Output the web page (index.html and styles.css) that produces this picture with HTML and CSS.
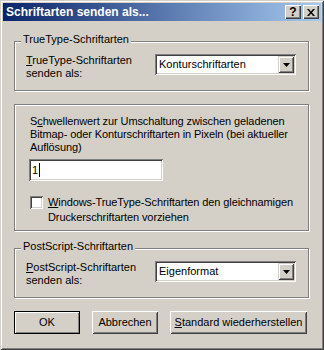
FILE: index.html
```html
<!DOCTYPE html>
<html lang="de">
<head>
    <meta charset="UTF-8">
    <title>Schriftarten senden als...</title>
    <link rel="stylesheet" href="styles.css">
</head>
<body>
    <div class="window">
        <div class="titlebar">
            <span class="title">Schriftarten senden als...</span>
            <div class="title-buttons">
                <span class="tbtn tbtn-help">?</span>
                <span class="tbtn">
                    <svg width="8" height="7" viewBox="0 0 8 7">
                        <path d="M0 0h2l2 2.5L6 0h2L5 3.5 8 7H6L4 4.5 2 7H0l3-3.5z" fill="#000"/>
                    </svg>
                </span>
            </div>
        </div>

        <div class="client">
            <fieldset class="group group-first">
                <legend>TrueType-Schriftarten</legend>
                <div class="row">
                    <label class="row-label"><u>T</u>rueType-Schriftarten<br>senden als:</label>
                    <div class="combo">
                        <span class="combo-text">Konturschriftarten</span>
                        <span class="combo-btn">
                            <svg width="7" height="4" viewBox="0 0 7 4"><path d="M0 0h7L3.5 4z" fill="#000"/></svg>
                        </span>
                    </div>
                </div>
            </fieldset>

            <fieldset class="group group-plain">
                <p class="hint">S<u>c</u>hwellenwert zur Umschaltung zwischen geladenen<br>Bitmap- oder Konturschriftarten in Pixeln (bei aktueller<br>Auflösung)</p>
                <div class="edit"><span>1</span><span class="caret"></span></div>
                <div class="check-row">
                    <span class="checkbox"></span>
                    <label class="check-label"><u>W</u>indows-TrueType-Schriftarten den gleichnamigen<br>Druckerschriftarten vorziehen</label>
                </div>
            </fieldset>

            <fieldset class="group group-last">
                <legend>PostScript-Schriftarten</legend>
                <div class="row">
                    <label class="row-label"><u>P</u>ostScript-Schriftarten<br>senden als:</label>
                    <div class="combo">
                        <span class="combo-text">Eigenformat</span>
                        <span class="combo-btn">
                            <svg width="7" height="4" viewBox="0 0 7 4"><path d="M0 0h7L3.5 4z" fill="#000"/></svg>
                        </span>
                    </div>
                </div>
            </fieldset>

            <div class="buttons">
                <button class="btn btn-default btn-small">OK</button>
                <button class="btn btn-small">Abbrechen</button>
                <button class="btn btn-wide"><u>S</u>tandard wiederherstellen</button>
            </div>
        </div>
    </div>
</body>
</html>
```

FILE: styles.css
```css
* {
    box-sizing: border-box;
}
body {
    margin: 0;
    font-family: "Liberation Sans", Arial, sans-serif;
    font-size: 11px;
    color: #000;
    background-color: #d4d0c8;
}
u {
    text-decoration-thickness: 1px;
    text-underline-offset: 1px;
}
.window {
    width: 324px;
    height: 350px;
    padding: 3px;
    background-color: #d4d0c8;
    box-shadow: inset 1px 1px #d4d0c8, inset -1px -1px #404040,
        inset 2px 2px #fff, inset -2px -2px #808080;
    display: flex;
    flex-direction: column;
}
.titlebar {
    height: 18px;
    background: linear-gradient(to right, #0a246a, #a6caf0);
    display: flex;
    align-items: center;
    justify-content: space-between;
    padding: 0 2px 0 3px;
}
.title {
    color: #fff;
    font-weight: bold;
    font-size: 12px;
    line-height: 18px;
}
.title-buttons {
    display: flex;
    gap: 2px;
}
.tbtn {
    width: 16px;
    height: 14px;
    background-color: #d4d0c8;
    box-shadow: inset 1px 1px #fff, inset -1px -1px #404040, inset -2px -2px #808080;
    display: flex;
    align-items: center;
    justify-content: center;
}
.tbtn-help {
    font-weight: bold;
    font-size: 12px;
    line-height: 14px;
}
.client {
    display: flex;
    flex-direction: column;
    padding: 0 12px 0 11px;
}

/* etched group boxes */
.group {
    margin: 0;
    padding: 0;
    min-width: 0;
    border: 1px solid #808080;
    box-shadow: 1px 1px #fff, inset 1px 1px #fff;
}
.group legend {
    margin-left: 6px;
    padding: 0 2px 4px;
    line-height: 13px;
    background-color: #d4d0c8;
}
.group-first {
    margin-top: 12px;
}
.group-plain {
    margin-top: 13px;
    padding: 10px 10px 5px 14px;
}
.group-last {
    margin-top: 9px;
}
.row {
    display: flex;
    align-items: flex-start;
    padding: 4px 12px 10px 11px;
}
.row-label {
    flex: 1;
    line-height: 13px;
}
.combo {
    width: 141px;
    height: 21px;
    padding: 2px;
    display: flex;
    background-color: #fff;
    box-shadow: inset 1px 1px #808080, inset -1px -1px #fff,
        inset 2px 2px #404040, inset -2px -2px #d4d0c8;
}
.combo-text {
    flex: 1;
    padding-left: 2px;
    line-height: 17px;
}
.combo-btn {
    width: 16px;
    height: 17px;
    background-color: #d4d0c8;
    box-shadow: inset 1px 1px #d4d0c8, inset -1px -1px #404040,
        inset 2px 2px #fff, inset -2px -2px #808080;
    display: flex;
    align-items: center;
    justify-content: center;
}
.hint {
    margin: 0 0 0 1px;
    line-height: 13px;
    white-space: nowrap;
    letter-spacing: -0.1px;
}
.edit {
    width: 134px;
    height: 22px;
    margin-top: 5px;
    padding: 0 3px;
    display: flex;
    align-items: center;
    background-color: #fff;
    box-shadow: inset 1px 1px #808080, inset -1px -1px #fff,
        inset 2px 2px #404040, inset -2px -2px #d4d0c8;
}
.caret {
    width: 1px;
    height: 14px;
    margin-left: 1px;
    background-color: #000;
}
.check-row {
    display: flex;
    align-items: flex-start;
    gap: 5px;
    margin-top: 14px;
    padding-left: 1px;
}
.checkbox {
    flex: none;
    width: 13px;
    height: 13px;
    margin-top: 1px;
    background-color: #fff;
    box-shadow: inset 1px 1px #808080, inset -1px -1px #fff,
        inset 2px 2px #404040, inset -2px -2px #d4d0c8;
}
.check-label {
    line-height: 15px;
    white-space: nowrap;
    letter-spacing: -0.1px;
}
.buttons {
    display: flex;
    gap: 12px;
    margin-top: 13px;
}
.btn {
    height: 23px;
    padding: 0 0 1px;
    border: none;
    font: inherit;
    color: #000;
    background-color: #d4d0c8;
    box-shadow: inset 1px 1px #fff, inset -1px -1px #404040,
        inset 2px 2px #d4d0c8, inset -2px -2px #808080;
}
.btn-default {
    border: 1px solid #000;
    box-shadow: inset 1px 1px #fff, inset -1px -1px #808080;
}
.btn-small {
    width: 66px;
}
.btn-wide {
    width: 137px;
}
```
